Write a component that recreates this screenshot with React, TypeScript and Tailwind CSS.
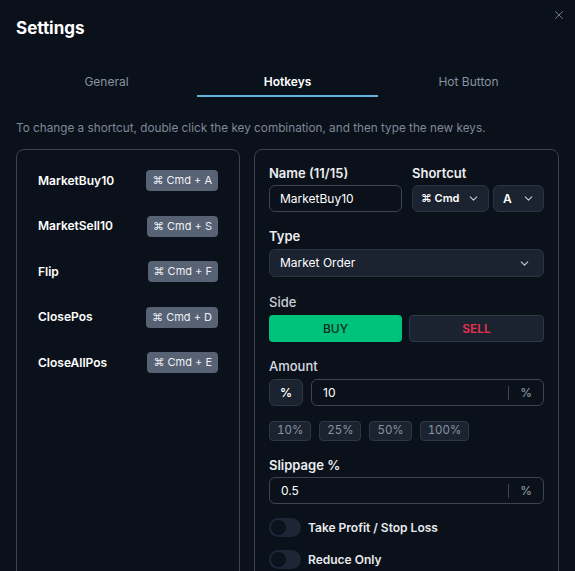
import { ChevronDown, X } from 'lucide-react';

const hotkeys = [
    { name: 'MarketBuy10', key: 'A' },
    { name: 'MarketSell10', key: 'S' },
    { name: 'Flip', key: 'F' },
    { name: 'ClosePos', key: 'D' },
    { name: 'CloseAllPos', key: 'E' },
];

function Toggle({ label }: { label: string }) {
    return (
        <div className="flex items-center gap-[7px]">
            <div className="w-[32px] h-[19px] rounded-full bg-[#1d2636] flex items-center pl-[2px]">
                <div className="w-[15px] h-[15px] rounded-full bg-[#0c121c]" />
            </div>
            <span className="text-[12px] font-semibold text-[#e8eaee]">{label}</span>
        </div>
    );
}

export default function App() {
    const tabs = ['General', 'Hotkeys', 'Hot Button'];

    return (
        <div
            className="w-[575px] h-[571px] overflow-hidden bg-[#0b111a] px-4 relative text-white"
            style={{ fontFamily: 'Inter, "Noto Sans", sans-serif' }}
        >
            {/* close */}
            <button className="absolute right-[9px] top-[8px] text-[#7f8896]">
                <X size={14} strokeWidth={1.5} />
            </button>

            <h1 className="pt-[15px] text-[17px] leading-[26px] font-bold text-white">Settings</h1>

            {/* Tabs */}
            <div className="mt-[25px] grid grid-cols-3">
                {tabs.map((t) => (
                    <div
                        key={t}
                        className={
                            t === 'Hotkeys'
                                ? 'h-[31px] flex items-start justify-center pt-[7px] text-[12px] font-semibold text-white border-b-2 border-[#5fb3d9]'
                                : 'h-[31px] flex items-start justify-center pt-[7px] text-[12px] text-[#8792a3]'
                        }
                    >
                        {t}
                    </div>
                ))}
            </div>

            <p className="mt-[22px] text-[11.75px] leading-[18px] text-[#7f8898]">
                To change a shortcut, double click the key combination, and then type the new keys.
            </p>

            <div className="mt-[12px] flex gap-[14px]">
                {/* Hotkey list */}
                <div className="w-[224px] h-[440px] shrink-0 rounded-lg border border-[#3d434d] pt-[20px] pl-[21px] pr-[21px]">
                    <div className="flex flex-col gap-[24.5px]">
                        {hotkeys.map((h) => (
                            <div key={h.name} className="h-[21px] flex items-center justify-between">
                                <span className="text-[12px] font-semibold text-white">{h.name}</span>
                                <span className="h-[21px] px-[6px] rounded bg-[#576275] text-[11px] text-[#eef0f3] flex items-center">
                                    ⌘ Cmd + {h.key}
                                </span>
                            </div>
                        ))}
                    </div>
                </div>

                {/* Editor */}
                <div className="flex-1 h-[440px] rounded-lg border border-[#3d434d] pt-[15px] px-[14px]">
                    <div className="flex gap-[10px]">
                        <div className="w-[133px]">
                            <div className="text-[13px] leading-4 font-semibold text-[#eceef1] mb-[4px]">Name (11/15)</div>
                            <div className="h-[27px] rounded-md border border-[#3d4450] flex items-center pl-[10px] text-[12px] text-white">
                                MarketBuy10
                            </div>
                        </div>
                        <div className="flex-1">
                            <div className="text-[13px] leading-4 font-semibold text-[#eceef1] mb-[4px]">Shortcut</div>
                            <div className="flex gap-[4px]">
                                <div className="w-[77px] h-[27px] rounded-md border border-[#2c3341] bg-[#1b2230] flex items-center justify-between pl-[8px] pr-[8px] text-[11px] font-semibold text-white">
                                    <span>⌘ Cmd</span>
                                    <ChevronDown size={13} className="text-[#c9ced6]" />
                                </div>
                                <div className="flex-1 h-[27px] rounded-md border border-[#2c3341] bg-[#1b2230] flex items-center justify-between pl-[9px] pr-[8px] text-[12px] font-semibold text-white">
                                    <span>A</span>
                                    <ChevronDown size={13} className="text-[#c9ced6]" />
                                </div>
                            </div>
                        </div>
                    </div>

                    <div className="mt-[16px] text-[13px] leading-4 font-semibold text-[#eceef1] mb-[5px]">Type</div>
                    <div className="h-[28px] rounded-md border border-[#2c3341] bg-[#1b2230] flex items-center justify-between pl-[10px] pr-[12px] text-[12px] text-white">
                        <span>Market Order</span>
                        <ChevronDown size={13} className="text-[#c9ced6]" />
                    </div>

                    <div className="mt-[17px] text-[13px] leading-4 font-medium text-[#c9ced6] mb-[5px]">Side</div>
                    <div className="flex gap-[7px]">
                        <button className="flex-1 h-[27px] rounded bg-[#00c37b] text-[12px] text-[#0d2a1f] font-medium">BUY</button>
                        <button className="flex-1 h-[27px] rounded border border-[#2f3644] bg-[#1b2230] text-[12px] text-[#e8334e] font-semibold">SELL</button>
                    </div>

                    <div className="mt-[16px] text-[13px] leading-4 font-medium text-[#d8dce2] mb-[5px]">Amount</div>
                    <div className="flex gap-[8px]">
                        <button className="w-[34px] h-[27px] rounded-md border border-[#2f3644] bg-[#1b2230] text-[12px] font-semibold text-white">%</button>
                        <div className="flex-1 h-[27px] rounded-md border border-[#3d4450] flex items-center pl-[11px] pr-[11px] text-[12px] text-white">
                            <span className="flex-1">10</span>
                            <span className="w-px h-[14px] bg-[#3d4450] mr-[11px]" />
                            <span className="text-[12px] text-[#9aa2ae]">%</span>
                        </div>
                    </div>

                    <div className="mt-[15px] flex gap-[8px]">
                        {['10%', '25%', '50%', '100%'].map((c) => (
                            <span
                                key={c}
                                className="h-[20px] px-[7px] rounded border border-[#2f3644] bg-[#1b2230] text-[11.5px] tabular-nums text-[#8a93a2] flex items-center"
                            >
                                {c}
                            </span>
                        ))}
                    </div>

                    <div className="mt-[16px] text-[13px] leading-4 font-semibold text-[#eceef1] mb-[4px]">Slippage %</div>
                    <div className="h-[27px] rounded-md border border-[#3d4450] flex items-center pl-[11px] pr-[11px] text-[12px] text-white">
                        <span className="flex-1">0.5</span>
                        <span className="w-px h-[14px] bg-[#3d4450] mr-[11px]" />
                        <span className="text-[12px] text-[#9aa2ae]">%</span>
                    </div>

                    <div className="mt-[14px] flex flex-col gap-[13px]">
                        <Toggle label="Take Profit / Stop Loss" />
                        <Toggle label="Reduce Only" />
                    </div>
                </div>
            </div>
        </div>
    );
}
